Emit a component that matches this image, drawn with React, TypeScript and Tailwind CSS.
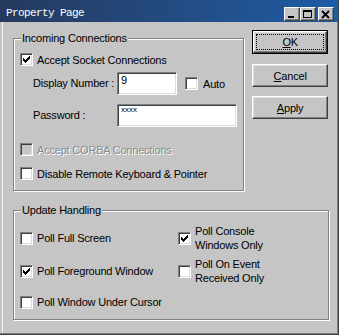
import type { ReactNode } from "react";

const CHECK_PIXELS: [number, number, number][] = [
	[6, 0, 1],
	[5, 1, 2],
	[0, 2, 1],
	[4, 2, 3],
	[0, 3, 2],
	[3, 3, 3],
	[0, 4, 5],
	[1, 5, 3],
	[2, 6, 1],
];

function CheckBox({
	checked = false,
	disabled = false,
}: {
	checked?: boolean;
	disabled?: boolean;
}) {
	return (
		<span
			className={`flex h-[13px] w-[13px] shrink-0 items-center justify-center border border-t-[#808080] border-l-[#808080] border-r-white border-b-white shadow-[inset_1px_1px_0_#404040,inset_-1px_-1px_0_#dcdcdc] ${
				disabled ? "bg-[#c5c5c5]" : "bg-white"
			}`}
		>
			{checked && (
				<svg width="7" height="7" viewBox="0 0 7 7" shapeRendering="crispEdges">
					{CHECK_PIXELS.map(([x, y, w]) => (
						<rect key={`${x}-${y}`} x={x} y={y} width={w} height={1} fill="#000" />
					))}
				</svg>
			)}
		</span>
	);
}

function CheckRow({
	label,
	checked,
	disabled,
	className = "",
}: {
	label: ReactNode;
	checked?: boolean;
	disabled?: boolean;
	className?: string;
}) {
	return (
		<div className={`flex items-center gap-[4px] ${className}`}>
			<CheckBox checked={checked} disabled={disabled} />
			<span
				className={`whitespace-nowrap leading-[14px] ${
					disabled ? "text-[#8a8a8a] [text-shadow:1px_1px_0_#fff]" : "text-black"
				}`}
			>
				{label}
			</span>
		</div>
	);
}

function Button({
	children,
	isDefault = false,
	className = "",
}: {
	children: ReactNode;
	isDefault?: boolean;
	className?: string;
}) {
	const face = (
		<div className="relative flex h-full w-full items-center justify-center border border-t-white border-l-white border-r-[#404040] border-b-[#404040] bg-[#c5c5c5] shadow-[inset_-1px_-1px_0_#808080,inset_1px_1px_0_#dfdfdf]">
			{isDefault && (
				<span className="pointer-events-none absolute inset-[2px] border border-dotted border-black" />
			)}
			<span className="leading-[14px] text-black">{children}</span>
		</div>
	);
	if (isDefault) {
		return <div className={`border border-black ${className}`}>{face}</div>;
	}
	return <div className={className}>{face}</div>;
}

function TitleButton({ kind }: { kind: "min" | "max" | "close" }) {
	return (
		<div className="flex h-[14px] w-[16px] items-center justify-center border border-t-white border-l-white border-r-[#404040] border-b-[#404040] bg-[#c5c5c5] shadow-[inset_-1px_-1px_0_#808080]">
			<svg width="10" height="9" viewBox="0 0 10 9" shapeRendering="crispEdges">
				{kind === "min" && <rect x="1" y="6" width="6" height="2" fill="#000" />}
				{kind === "max" && (
					<>
						<rect x="0.5" y="0.5" width="8" height="7" fill="none" stroke="#000" />
						<rect x="0" y="1" width="9" height="1" fill="#000" />
					</>
				)}
				{kind === "close" && (
					<path
						d="M1 1 L8 8 M8 1 L1 8"
						stroke="#000"
						strokeWidth="1.8"
						shapeRendering="auto"
					/>
				)}
			</svg>
		</div>
	);
}

function Edit({ children, className = "" }: { children?: ReactNode; className?: string }) {
	return (
		<div
			className={`border border-t-[#808080] border-l-[#808080] border-r-white border-b-white bg-white pl-[3px] shadow-[inset_1px_1px_0_#404040,inset_-1px_-1px_0_#dcdcdc] ${className}`}
		>
			{children}
		</div>
	);
}

function Group({
	title,
	className = "",
	children,
}: {
	title: string;
	className?: string;
	children: ReactNode;
}) {
	return (
		<fieldset
			className={`m-0 min-w-0 border border-[#808080] px-[6px] pt-0 shadow-[inset_1px_1px_0_#fff,1px_1px_0_#fff] ${className}`}
		>
			<legend className="ml-[1px] bg-[#c5c5c5] px-[1px] leading-[13px] text-black">
				{title}
			</legend>
			{children}
		</fieldset>
	);
}

export default function App() {
	return (
		<div className="flex h-[335px] w-[339px] flex-col overflow-hidden border-r border-b border-[#404040] bg-[#c5c5c5] font-['Liberation_Sans',Arial,sans-serif] text-[11px] tracking-[-0.2px] shadow-[inset_-1px_-1px_0_#808080,inset_2px_0_0_#c5c5c5,inset_3px_0_0_#f4f4f4]">
			{/* Title bar */}
			<div className="flex h-[22px] shrink-0 items-start bg-gradient-to-r from-[#253a5e] to-[#1c5ca6] pl-[6px] pr-[4px]">
				<span className="pt-[8px] font-['Liberation_Mono','DejaVu_Sans_Mono',monospace] text-[11px] leading-[11px] tracking-[-0.6px] text-white">
					Property Page
				</span>
				<div className="ml-auto flex pt-[7px]">
					<TitleButton kind="min" />
					<TitleButton kind="max" />
					<div className="ml-[2px]">
						<TitleButton kind="close" />
					</div>
				</div>
			</div>

			{/* Body */}
			<div className="flex flex-col pl-[13px] pr-[10px] pt-[8px]">
				<div className="flex items-start gap-[8px]">
					<Group title="Incoming Connections" className="mt-[2px] w-[232px] pb-[10px]">
						<CheckRow label="Accept Socket Connections" checked className="mt-[8px] h-[13px]" />
						<div className="mt-[6px] flex h-[23px] items-center">
							<span className="ml-[13px] w-[84px] whitespace-nowrap">Display Number :</span>
							<Edit className="h-[23px] w-[60px] pt-[1px] leading-[13px]">9</Edit>
							<CheckRow label="Auto" className="ml-[8px] gap-[5px]" />
						</div>
						<div className="mt-[9px] flex h-[23px] items-center">
							<span className="ml-[13px] w-[84px] whitespace-nowrap">Password :</span>
							<Edit className="h-[23px] w-[120px] text-[8px] leading-[10px] tracking-normal">
								xxxx
							</Edit>
						</div>
						<CheckRow label="Accept CORBA Connections" disabled className="mt-[16px] h-[13px]" />
						<CheckRow label="Disable Remote Keyboard &amp; Pointer" className="mt-[11px] h-[13px]" />
					</Group>

					<div className="flex w-[76px] flex-col">
						<Button isDefault className="h-[24px]">
							<u className="underline-offset-[1px]">O</u>K
						</Button>
						<Button className="mt-[10px] h-[23px]">
							<u className="underline-offset-[1px]">C</u>ancel
						</Button>
						<Button className="mt-[9px] h-[23px]">
							<u className="underline-offset-[1px]">A</u>pply
						</Button>
					</div>
				</div>

				<Group title="Update Handling" className="mt-[13px] w-[316px] pb-[3px]">
					<div className="mt-[7px] flex h-[28px] items-center">
						<CheckRow label="Poll Full Screen" className="w-[158px]" />
						<CheckRow
							checked
							label={
								<>
									Poll Console
									<br />
									Windows Only
								</>
							}
						/>
					</div>
					<div className="mt-[5px] flex h-[28px] items-center">
						<CheckRow label="Poll Foreground Window" checked className="w-[158px]" />
						<CheckRow
							label={
								<>
									Poll On Event
									<br />
									Received Only
								</>
							}
						/>
					</div>
					<div className="mt-[3px] flex h-[28px] items-center">
						<CheckRow label="Poll Window Under Cursor" className="w-[158px]" />
					</div>
				</Group>
			</div>
		</div>
	);
}
